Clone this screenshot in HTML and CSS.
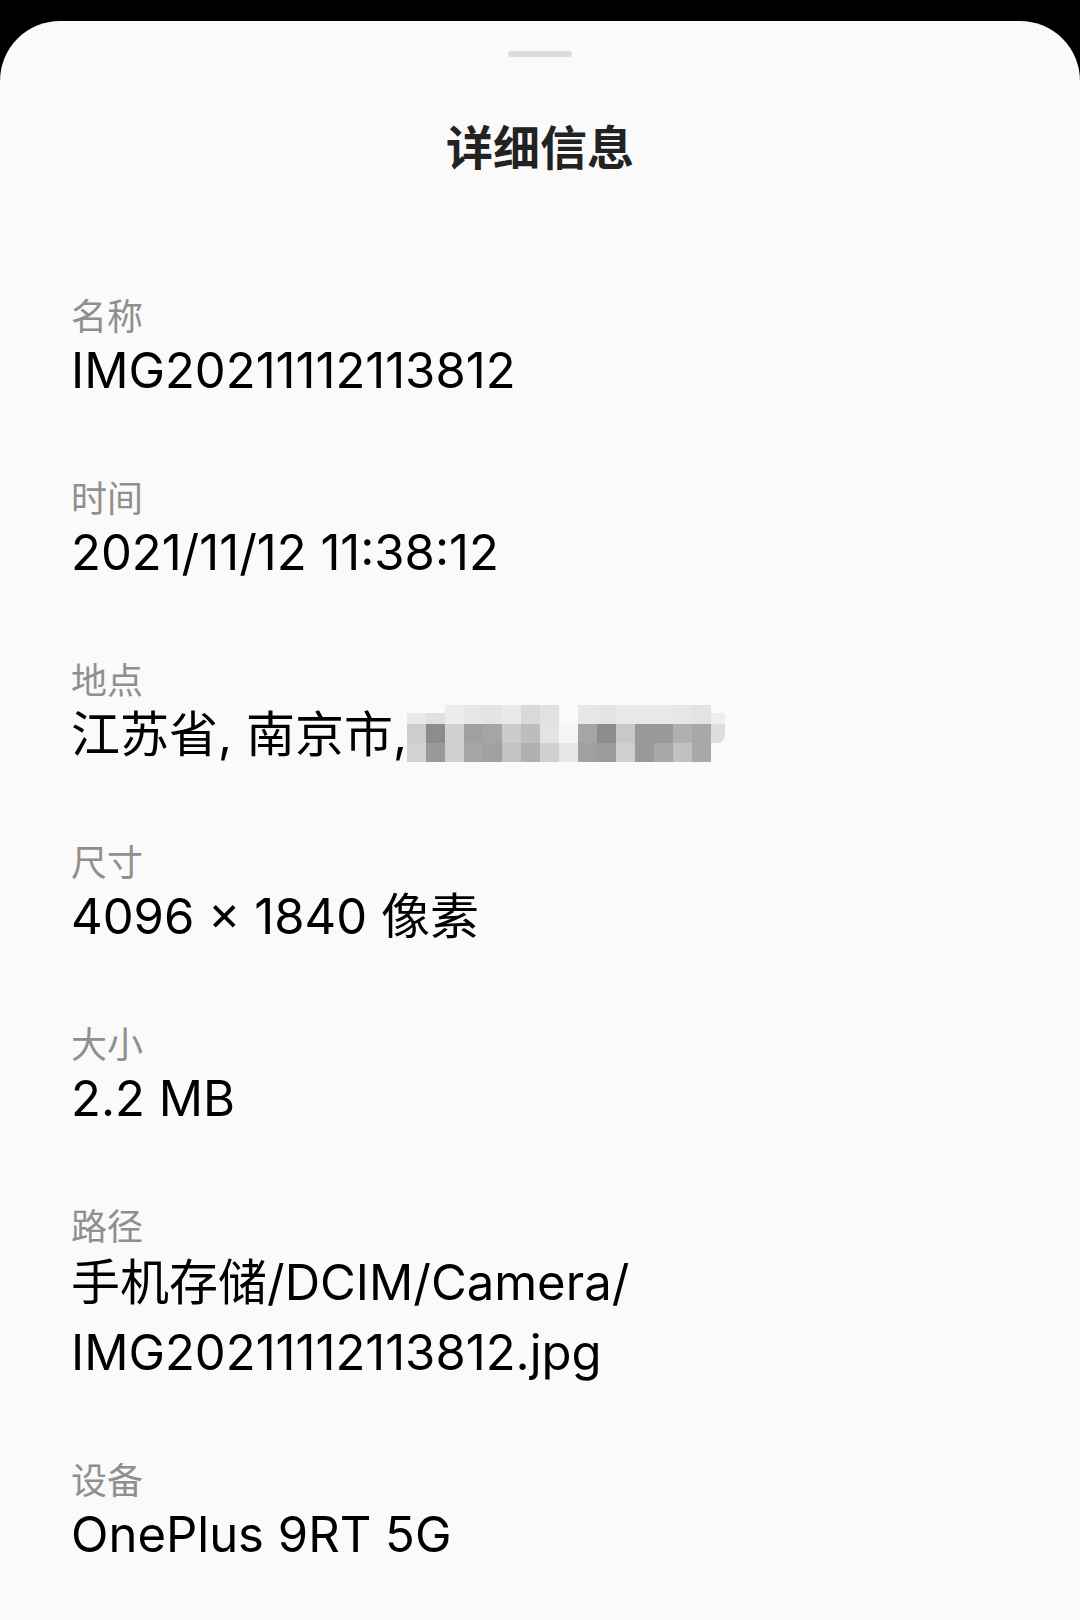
FILE: index.html
```html
<!DOCTYPE html>
<html lang="zh-CN">
<head>
<meta charset="utf-8">
<title>详细信息</title>
<link rel="stylesheet" href="styles.css">
</head>
<body>
<div class="screen">
  <div class="sheet">
    <div class="handle"></div>
    <h1 class="title">详细信息</h1>
    <div class="details">
      <div class="row">
        <div class="label">名称</div>
        <div class="value">IMG20211112113812</div>
      </div>
      <div class="row">
        <div class="label">时间</div>
        <div class="value">2021/11/12 11:38:12</div>
      </div>
      <div class="row">
        <div class="label">地点</div>
        <div class="value">江苏省, 南京市,<span class="mosaic"><span class="mosaic-grid">
          <i class="c1"></i><i class="c2"></i><i class="c3"></i><i class="c4"></i><i class="c5"></i><i class="c6"></i><i class="c7"></i><i class="c8"></i><i class="c9"></i><i class="c10"></i><i class="c11"></i><i class="c12"></i><i class="c13"></i><i class="c14"></i><i class="c15"></i><i class="c16"></i><i class="c17"></i>
          <i class="d1"></i><i class="d2"></i><i class="d3"></i><i class="d4"></i><i class="d5"></i><i class="d6"></i><i class="d7"></i><i class="d8"></i><i class="d9"></i><i class="d10"></i><i class="d11"></i><i class="d12"></i><i class="d13"></i><i class="d14"></i><i class="d15"></i><i class="d16"></i><i class="d17"></i>
          <i class="e1"></i><i class="e2"></i><i class="e3"></i><i class="e4"></i><i class="e5"></i><i class="e6"></i><i class="e7"></i><i class="e8"></i><i class="e9"></i><i class="e10"></i><i class="e11"></i><i class="e12"></i><i class="e13"></i><i class="e14"></i><i class="e15"></i><i class="e16"></i><i class="e17"></i>
        </span></span></div>
      </div>
      <div class="row">
        <div class="label">尺寸</div>
        <div class="value">4096 × 1840 像素</div>
      </div>
      <div class="row">
        <div class="label">大小</div>
        <div class="value">2.2 MB</div>
      </div>
      <div class="row">
        <div class="label">路径</div>
        <div class="value value-multi">手机存储/DCIM/Camera/<br>IMG20211112113812.jpg</div>
      </div>
      <div class="row">
        <div class="label">设备</div>
        <div class="value">OnePlus 9RT 5G</div>
      </div>
    </div>
  </div>
</div>
</body>
</html>
```

FILE: styles.css
```css
html, body {
  margin: 0;
  padding: 0;
  background: #000;
}

.screen {
  width: 1080px;
  height: 1620px;
  padding-top: 21px;
  box-sizing: border-box;
  display: flex;
  flex-direction: column;
  overflow: hidden;
}

.sheet {
  flex: 1;
  background: #fafafa;
  border-radius: 60px 60px 0 0;
  display: flex;
  flex-direction: column;
  font-family: "Inter", "Noto Sans CJK SC", sans-serif;
}

.handle {
  align-self: center;
  width: 64px;
  height: 6px;
  margin-top: 30px;
  border-radius: 3px;
  background: #dcdcdc;
}

.title {
  margin: 58px 0 0;
  text-align: center;
  font-family: "Noto Sans CJK SC", sans-serif;
  font-size: 47px;
  line-height: 60px;
  font-weight: 700;
  color: #222;
}

.details {
  margin-top: 117px;
  padding-left: 71px;
  display: flex;
  flex-direction: column;
  gap: 68px;
}

.label {
  font-family: "Noto Sans CJK SC", sans-serif;
  font-size: 36px;
  line-height: 44px;
  color: #8f8f8f;
}

.value {
  font-size: 49px;
  line-height: 70px;
  color: #000;
  white-space: nowrap;
}

.value-multi {
  padding-top: 2px;
}

.mosaic {
  display: inline-block;
  overflow: hidden;
  vertical-align: baseline;
  margin-bottom: -10px;
}

.mosaic-grid {
  display: grid;
  grid-template-columns: repeat(16, 19px) 14px;
  grid-auto-rows: 19px;
}

.mosaic-grid i { display: block; }

.c1 { background: linear-gradient(#fafafa 40%, #e9e9e9 40%); }
.c2 { background: linear-gradient(#fafafa 40%, #e0e0e0 40%); }
.c3 { background: #ececec; }
.c4 { background: #e6e6e6; }
.c5 { background: #e4e4e4; }
.c6 { background: #e9e9e9; }
.c7 { background: #d9d9d9; }
.c8 { background: #e2e2e2; }
.c9 { background: #fafafa; }
.c10 { background: #e6e6e6; }
.c11 { background: #e4e4e4; }
.c12 { background: #e8e8e8; }
.c13 { background: #e9e9e9; }
.c14 { background: #e8e8e8; }
.c15 { background: #e6e6e6; }
.c16 { background: #e3e3e3; }
.c17 { background: linear-gradient(#fafafa 40%, #eeeeee 40%); border-radius: 0 8px 0 0; }

.d1 { background: #cdcdcd; }
.d2 { background: #8c8c8c; }
.d3 { background: #d0d0d0; }
.d4 { background: #a0a0a0; }
.d5 { background: #a5a5a5; }
.d6 { background: #cbcbcb; }
.d7 { background: #bdbdbd; }
.d8 { background: #e3e3e3; }
.d9 { background: #f5f5f5; }
.d10 { background: #a5a5a5; }
.d11 { background: #8c8c8c; }
.d12 { background: #c8c8c8; }
.d13 { background: #999999; }
.d14 { background: #9a9a9a; }
.d15 { background: #b0b0b0; }
.d16 { background: #a8a8a8; }
.d17 { background: #dddddd; border-radius: 0 0 8px 0; }

.e1 { background: #d2d2d2; }
.e2 { background: #9a9a9a; }
.e3 { background: #cfcfcf; }
.e4 { background: #a6a6a6; }
.e5 { background: #a0a0a0; }
.e6 { background: #c3c3c3; }
.e7 { background: #b0b0b0; }
.e8 { background: #d0d0d0; }
.e9 { background: #e6e6e6; }
.e10 { background: #a0a0a0; }
.e11 { background: #9c9c9c; }
.e12 { background: #cfcfcf; }
.e13 { background: #9a9a9a; }
.e14 { background: #a8a8a8; }
.e15 { background: #c2c2c2; }
.e16 { background: #a9a9a9; }
.e17 { background: transparent; }
```
